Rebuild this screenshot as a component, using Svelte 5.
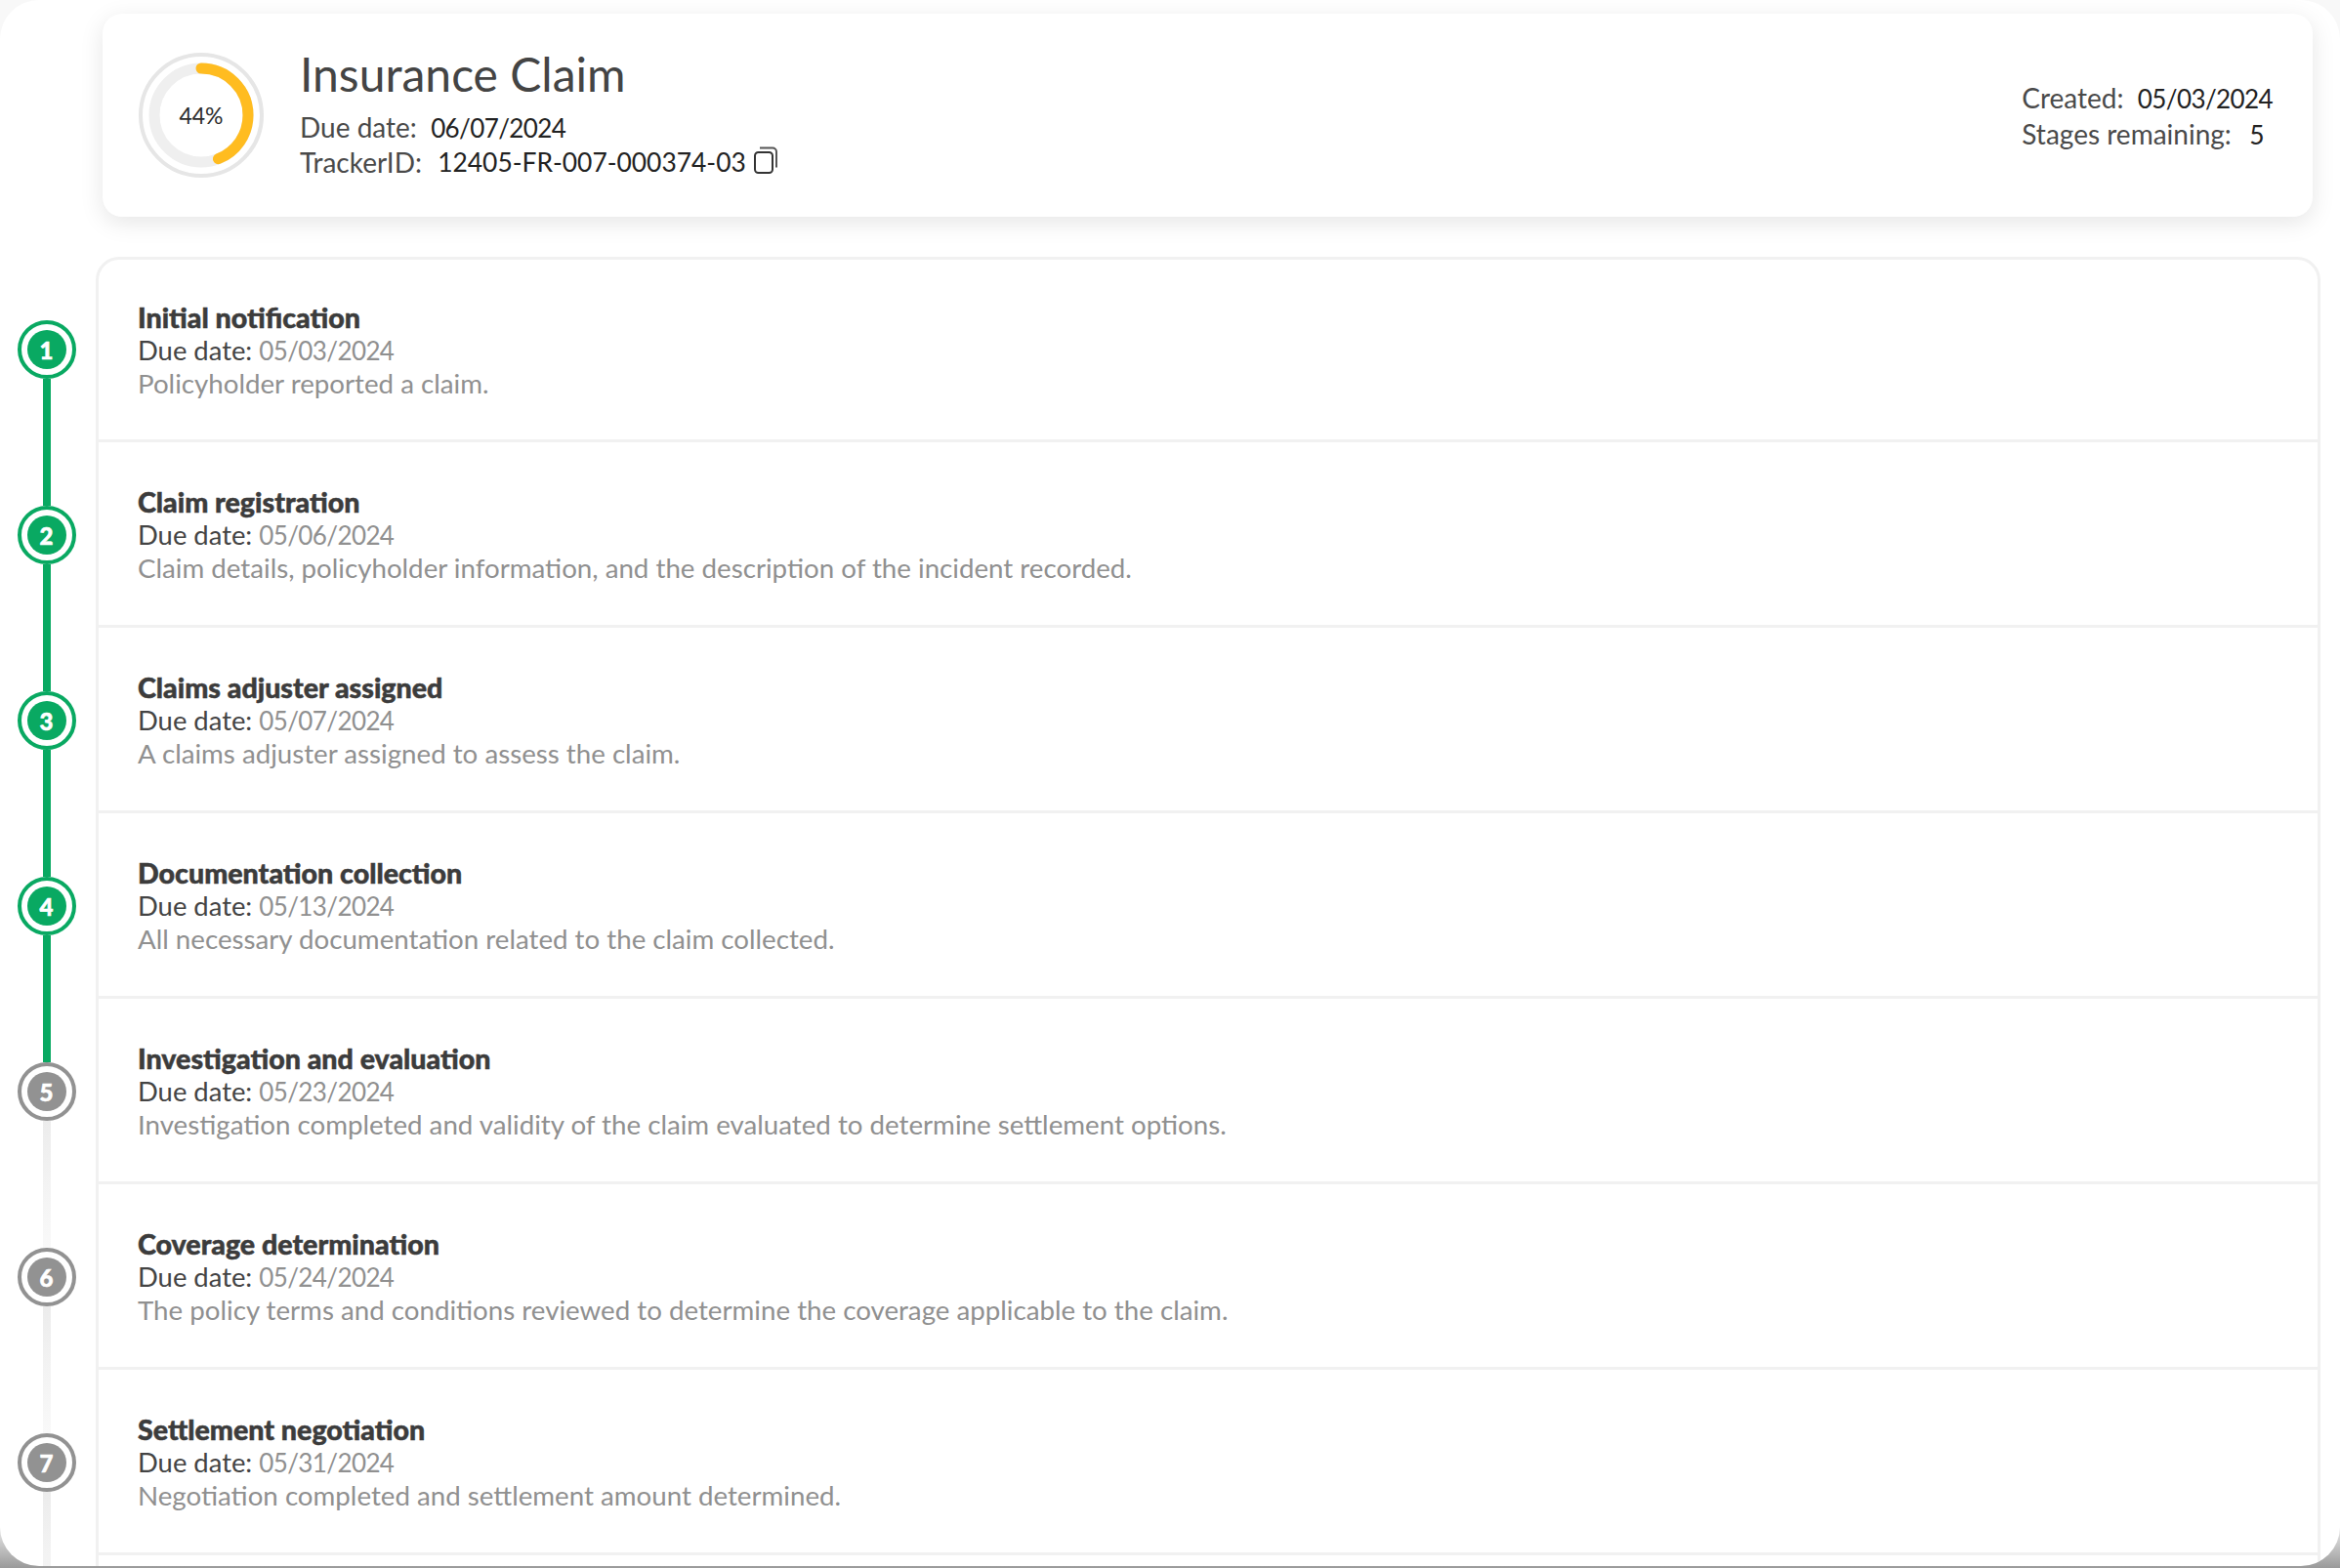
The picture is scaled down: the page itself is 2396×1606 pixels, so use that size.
<script>
  const stages = [
    { name: 'Initial notification', due: '05/03/2024', note: 'Policyholder reported a claim.', done: true },
    { name: 'Claim registration', due: '05/06/2024', note: 'Claim details, policyholder information, and the description of the incident recorded.', done: true },
    { name: 'Claims adjuster assigned', due: '05/07/2024', note: 'A claims adjuster assigned to assess the claim.', done: true },
    { name: 'Documentation collection', due: '05/13/2024', note: 'All necessary documentation related to the claim collected.', done: true },
    { name: 'Investigation and evaluation', due: '05/23/2024', note: 'Investigation completed and validity of the claim evaluated to determine settlement options.', done: false },
    { name: 'Coverage determination', due: '05/24/2024', note: 'The policy terms and conditions reviewed to determine the coverage applicable to the claim.', done: false },
    { name: 'Settlement negotiation', due: '05/31/2024', note: 'Negotiation completed and settlement amount determined.', done: false },
  ];

  const percent = 44;
  const radius = 48;
  const circumference = 2 * Math.PI * radius;
  const dash = (percent / 100) * circumference;
</script>

<div class="screen">
  <div class="page">
    <header class="summary">
      <div class="gauge">
        <svg viewBox="0 0 128 128" width="128" height="128" aria-hidden="true">
          <circle cx="64" cy="64" r="62" fill="none" stroke="#e6e6e6" stroke-width="4" />
          <circle cx="64" cy="64" r={radius} fill="none" stroke="#efefef" stroke-width="11" />
          <circle
            cx="64"
            cy="64"
            r={radius}
            fill="none"
            stroke="#ffbc20"
            stroke-width="11"
            stroke-linecap="round"
            stroke-dasharray="{dash} {circumference}"
            transform="rotate(-90 64 64)"
          />
        </svg>
        <span class="gauge-label">{percent}%</span>
      </div>

      <div class="summary-main">
        <h1>Insurance Claim</h1>
        <div class="meta">Due date:&nbsp; <b class="date">06/07/2024</b></div>
        <div class="meta tracker">
          TrackerID:&nbsp; <b>12405-FR-007-000374-03</b>
          <svg class="copy" viewBox="0 0 24 28" width="24" height="28" aria-hidden="true">
            <rect x="1" y="6" width="18" height="21" rx="3.5" fill="none" stroke="#333" stroke-width="2" />
            <path d="M6 1.5h13a4 4 0 0 1 4 4v16" fill="none" stroke="#555" stroke-width="2" />
          </svg>
        </div>
      </div>

      <div class="summary-side">
        <div class="meta">Created:&nbsp; <b class="date">05/03/2024</b></div>
        <div class="meta remaining">Stages remaining:&nbsp; <b>5</b></div>
      </div>
    </header>

    <section class="timeline">
      {#each stages as stage, i}
        <div class="step">
          <div class="rail">
            <span
              class="seg top"
              class:hidden={i === 0}
              class:green={stage.done || stages[i - 1]?.done}
            ></span>
            <span class="node" class:green={stage.done}><span class="dot">{i + 1}</span></span>
            <span class="seg bottom" class:green={stage.done}></span>
          </div>
          <div class="row">
            <div class="name">{stage.name}</div>
            <div class="due">Due date: <span class="date">{stage.due}</span></div>
            <div class="note">{stage.note}</div>
          </div>
        </div>
      {/each}
      <div class="step">
        <div class="rail"><span class="seg top"></span></div>
        <div class="row"></div>
      </div>
    </section>
  </div>
</div>

<style>
  :global(body) {
    margin: 0;
  }
  .screen {
    height: 1606px;
    overflow: hidden;
    background: linear-gradient(#f8f8f8 0, #f8f8f8 96.5%, #d8d8d8 98%, #9a9a9a 100%);
    font-family: Lato, 'Liberation Sans', sans-serif;
  }
  .page {
    height: 1604px;
    overflow: hidden;
    box-sizing: border-box;
    padding: 14px 20px 0 0;
    background: #fff;
    border-radius: 40px;
  }
  .summary {
    display: flex;
    align-items: center;
    box-sizing: border-box;
    height: 208px;
    margin: 0 8px 41px 105px;
    padding: 0 41px 0 37px;
    background: #fff;
    border-radius: 20px;
    box-shadow: 0 6px 24px rgba(0, 0, 0, 0.1);
  }
  .gauge {
    position: relative;
    display: flex;
    width: 128px;
    height: 128px;
    margin-right: 37px;
  }
  .gauge-label {
    position: absolute;
    inset: 0;
    display: flex;
    align-items: center;
    justify-content: center;
    font-size: 23px;
    color: #2d2d2d;
  }
  .summary-main {
    flex: 1;
    margin-top: -5px;
  }
  .summary-side {
    margin-top: 2px;
  }
  h1 {
    margin: 0 0 8px;
    font-size: 48px;
    line-height: 56px;
    font-weight: 400;
    color: #444;
  }
  .meta {
    font-size: 28px;
    line-height: 36px;
    color: #4a4a4a;
    white-space: nowrap;
  }
  .meta b {
    font-weight: 400;
    font-size: 26.4px;
    color: #222;
  }
  .date,
  .meta b.date {
    font-size: 26px;
    letter-spacing: -0.6px;
  }
  .remaining b {
    margin-left: 4px;
  }
  .tracker {
    display: flex;
    align-items: center;
    margin-top: -1px;
  }
  .tracker b {
    margin-left: 9px;
  }
  .copy {
    margin-left: 8px;
    margin-top: -4px;
  }
  .timeline {
    display: flex;
    flex-direction: column;
  }
  .step {
    display: flex;
    height: 190px;
    flex: none;
  }
  .rail {
    flex: none;
    box-sizing: border-box;
    width: 94px;
    padding-left: 1px;
    display: flex;
    flex-direction: column;
    align-items: center;
  }
  .seg {
    flex: 1;
    width: 8px;
  }
  .seg.top {
    background: linear-gradient(#f3f3f3, #f9f9f9);
  }
  .seg.bottom {
    background: linear-gradient(#ececec, #f3f3f3);
  }
  .seg.green {
    background: #09a962;
  }
  .seg.hidden {
    visibility: hidden;
  }
  .node {
    flex: none;
    box-sizing: border-box;
    width: 60px;
    height: 60px;
    padding: 6px;
    border: 4px solid #929292;
    border-radius: 50%;
    background: #fff;
  }
  .node.green {
    border-color: #09a962;
  }
  .dot {
    display: flex;
    align-items: center;
    justify-content: center;
    height: 100%;
    border-radius: 50%;
    background: #929292;
    color: #fff;
    font-size: 24px;
    font-weight: 900;
    -webkit-text-stroke: 0.6px #fff;
  }
  .node.green .dot {
    background: #09a962;
  }
  .row {
    flex: 1;
    box-sizing: border-box;
    padding: 44px 40px 0 40px;
    margin-left: 4px;
    border-left: 3px solid #f1f1f1;
    border-right: 3px solid #f1f1f1;
    border-bottom: 3px solid #f1f1f1;
    font-size: 27.4px;
    line-height: 34px;
  }
  .step:first-child .row {
    border-top: 3px solid #f1f1f1;
    border-top-left-radius: 24px;
    border-top-right-radius: 24px;
    padding-top: 42px;
  }
  .name {
    font-size: 28.6px;
    font-weight: 900;
    color: #3c3c3c;
    -webkit-text-stroke: 0.5px #3c3c3c;
  }
  .due {
    color: #444;
  }
  .due .date {
    color: #909090;
  }
  .note {
    font-size: 27.7px;
    color: #909090;
  }
</style>
